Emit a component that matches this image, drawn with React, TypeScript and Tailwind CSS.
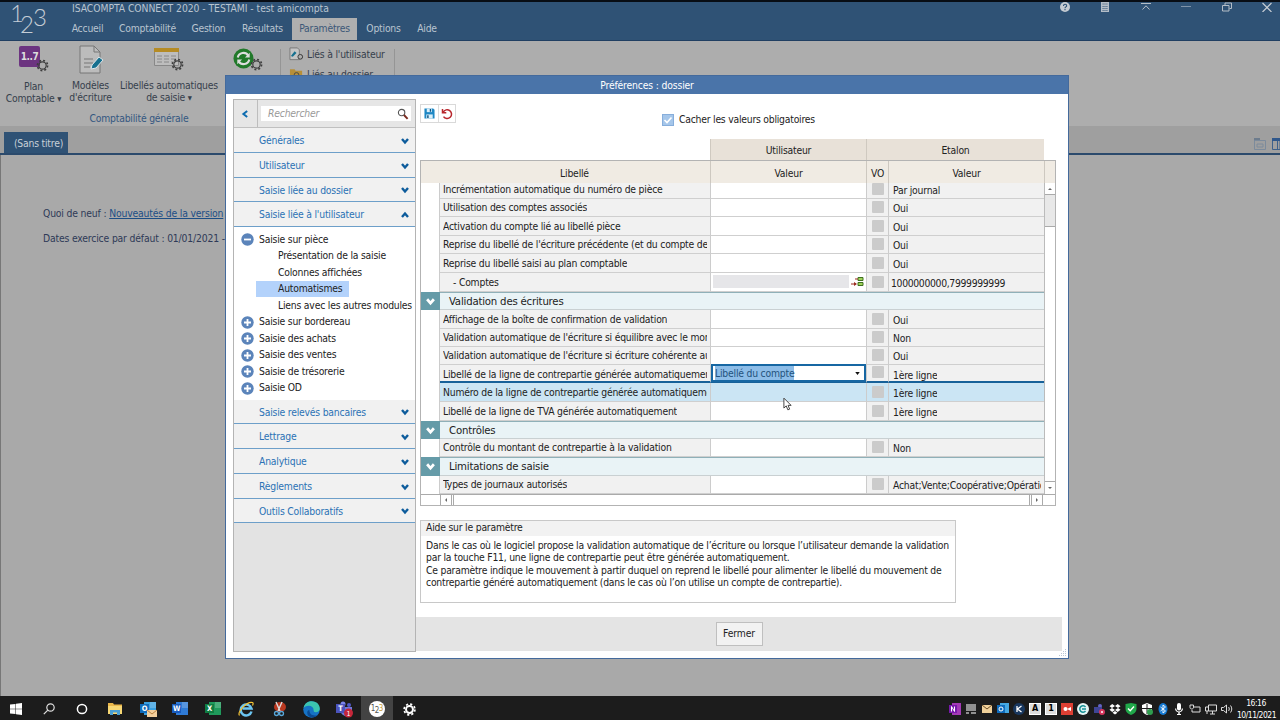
import * as React from "react";

interface IRow {
  h: string;
  label: string;
  etalon?: string;
  kind?: "group" | "edit" | "hover" | "accounts";
}

const rows: IRow[] = [
  { h: "h-[16px]", label: "Incrémentation automatique du numéro de pièce", etalon: "Par journal" },
  { h: "h-[18px]", label: "Utilisation des comptes associés", etalon: "Oui" },
  { h: "h-[19px]", label: "Activation du compte lié au libellé pièce", etalon: "Oui" },
  { h: "h-[18px]", label: "Reprise du libellé de l'écriture précédente (et du compte de", etalon: "Oui" },
  { h: "h-[19px]", label: "Reprise du libellé saisi au plan comptable", etalon: "Oui" },
  { h: "h-[19px]", label: "- Comptes", etalon: "1000000000,7999999999", kind: "accounts" },
  { h: "h-[18px]", label: "Validation des écritures", kind: "group" },
  { h: "h-[19px]", label: "Affichage de la boîte de confirmation de validation", etalon: "Oui" },
  { h: "h-[18px]", label: "Validation automatique de l'écriture si équilibre avec le mon", etalon: "Non" },
  { h: "h-[18px]", label: "Validation automatique de l'écriture si écriture cohérente au", etalon: "Oui" },
  { h: "h-[18px]", label: "Libellé de la ligne de contrepartie générée automatiquement", etalon: "1ère ligne", kind: "edit" },
  { h: "h-[19px]", label: "Numéro de la ligne de contrepartie générée automatiquement", etalon: "1ère ligne", kind: "hover" },
  { h: "h-[19px]", label: "Libellé de la ligne de TVA générée automatiquement", etalon: "1ère ligne" },
  { h: "h-[18px]", label: "Contrôles", kind: "group" },
  { h: "h-[18px]", label: "Contrôle du montant de contrepartie à la validation", etalon: "Non" },
  { h: "h-[19px]", label: "Limitations de saisie", kind: "group" },
  { h: "h-[18px]", label: "Types de journaux autorisés", etalon: "Achat;Vente;Coopérative;Opératio" },
];

const menuTop = ["Générales", "Utilisateur", "Saisie liée au dossier", "Saisie liée à l'utilisateur"];
const menuBottom = ["Saisie relevés bancaires", "Lettrage", "Analytique", "Règlements", "Outils Collaboratifs"];
const children = ["Présentation de la saisie", "Colonnes affichées", "Automatismes", "Liens avec les autres modules"];
const closed = ["Saisie sur bordereau", "Saisie des achats", "Saisie des ventes", "Saisie de trésorerie", "Saisie OD"];

const Gear = ({ className }: { className: string }) => (
  <svg viewBox="0 0 12 12" className={className} fill="none" stroke="#3d3d3d">
    <circle cx="6" cy="6" r="3.4" strokeWidth="1.1" />
    <circle cx="6" cy="6" r="4.7" strokeWidth="1.5" strokeDasharray="1.8 1.89" />
  </svg>
);

const Chevron = ({ up, className }: { up?: boolean; className: string }) => (
  <svg viewBox="0 0 8 8" className={className} fill="none" stroke="currentColor" strokeWidth="2.4">
    <path d={up ? "M1 6 4 2.500 7 6" : "M1 2 4 5.500 7 2"} />
  </svg>
);

const MenuItem = ({ label, open }: { label: string; open?: boolean }) => (
  <div className="flex h-[24.75px] shrink-0 items-center border-b border-[#6d9fc9] bg-[#f1f1f1] pt-[2px] pr-[6px] pl-[25px] text-[#2b72b5]">
    <span className="flex-1">{label}</span>
    <Chevron up={open} className="size-2 text-[#0d5c9c]" />
  </div>
);

const Toggle = ({ minus }: { minus?: boolean }) => (
  <svg viewBox="0 0 13 13" className="mr-[5px] ml-[7px] size-[13px]">
    <circle cx="6.5" cy="6.5" r="6.2" fill="#5b84ba" />
    <path d={minus ? "M3 6.5h7" : "M3 6.5h7M6.5 3v7"} stroke="#fff" strokeWidth="1.8" />
  </svg>
);

const Sidebar = () => (
  <div className="flex h-[553px] w-[183px] flex-col border border-[#b4b4b4] bg-[#e3e3e3]">
    <div className="flex h-[28px] shrink-0 border-b border-[#c0c0c0] bg-[#e6e6e6]">
      <div className="flex w-6 items-center justify-center border-r border-[#bdbdbd] text-[#0d6cb0]">
        <svg viewBox="0 0 8 8" className="mr-[2px] size-2" fill="none" stroke="currentColor" strokeWidth="2">
          <path d="M6.2 1 2.4 4l3.8 3" />
        </svg>
      </div>
      <div className="mt-[6px] ml-[3px] flex h-[15px] w-[150px] items-center bg-white pl-[7px] text-[#999] italic">
        <span className="flex-1">Rechercher</span>
        <svg viewBox="0 0 12 12" className="mr-[2px] size-[12px]" fill="none">
          <circle cx="4.6" cy="4.6" r="3.2" stroke="#555" strokeWidth="1.1" />
          <path d="m7 7 3.6 3.8" stroke="#7a2b20" strokeWidth="1.9" />
        </svg>
      </div>
    </div>
    {menuTop.map((item, key) => (
      <MenuItem key={item} label={item} open={key === 3} />
    ))}
    <div className="h-[172.5px] shrink-0 bg-white pt-[4px] text-[#222]">
      <div className="flex h-[16.55px] items-center"><Toggle minus />Saisie sur pièce</div>
      {children.map((item) => (
        <div key={item} className="flex h-[16.55px] items-center pl-[22px] whitespace-nowrap">
          <span className={item === "Automatismes" ? "flex h-4 items-center bg-[#b3d2fb] pr-[7px] pl-[22px]" : "pl-[22px]"}>{item}</span>
        </div>
      ))}
      {closed.map((item) => (
        <div key={item} className="flex h-[16.55px] items-center"><Toggle />{item}</div>
      ))}
    </div>
    {menuBottom.map((item) => (
      <MenuItem key={item} label={item} />
    ))}
  </div>
);

const Combo = () => (
  <div className="relative z-10 -mt-px flex h-[18px] w-full items-center border-2 border-[#1767a3] bg-white pl-[2px]">
    <span className="bg-[#8dbde8] pt-px leading-[13px] text-[#23527c]">Libellé du compte</span>
    <svg viewBox="0 0 6 4" className="mr-[4px] ml-auto h-[3px] w-[5px]"><path d="M0 0h6L3 4z" fill="#111" /></svg>
  </div>
);

const TableRow = ({ row }: { row: IRow }) => {
  if (row.kind === "group") {
    return (
      <div className={`flex shrink-0 ${row.h}`}>
        <div className="flex w-[19px] items-center justify-center bg-[#659ba8] text-white">
          <Chevron className="size-[9px]" />
        </div>
        <div className="flex flex-1 items-center border-t border-b border-t-[#8fb0b8] border-b-[#c9d0d2] bg-[#e9f3f6] pt-[2px] pl-[9px] text-[11.300px]">{row.label}</div>
      </div>
    );
  }
  const hover = row.kind === "hover";
  const edit = row.kind === "edit";
  const line = edit ? "border-b-2 border-[#176199]" : "border-b border-[#cfcfcf]";
  const cell = `${hover ? "bg-[#cbe5f4]" : "bg-[#f1f1f1]"} ${line}`;
  return (
    <div className={`flex shrink-0 ${row.h}`}>
      <div className="w-[19px] border-r border-[#ccc] bg-white" />
      <div className={`flex w-[271px] items-end border-r border-r-[#ccc] pr-[3px] pl-[3px] ${edit ? "leading-[14px]" : "leading-[17px]"} ${cell}`}>
        <span className={row.kind === "accounts" ? "pl-[10px]" : "overflow-hidden whitespace-nowrap"}>{row.label}</span>
      </div>
      <div className={`flex w-[156px] items-start border-r border-r-[#ccc] ${line} ${hover ? "bg-[#cbe5f4]" : "bg-white"}`}>
        {edit && <Combo />}
        {row.kind === "accounts" && (
          <div className="mt-[2px] ml-[2px] flex h-[13px] w-[152px] bg-[#e6e6e9]">
            <svg viewBox="0 0 16 12" className="ml-auto h-[13px] w-[16px] bg-white">
              <path d="M9 2h5v3H9zM9 7h5v3H9z" fill="#9ed35a" stroke="#3f6f20" />
              <path d="M2 8.500h5M6 3.500h3" stroke="#9b2c20" strokeWidth="1.2" fill="none" />
              <path d="m5 6.500 3 2-3 2z" fill="#9b2c20" />
            </svg>
          </div>
        )}
      </div>
      <div className={`flex w-[22px] items-end justify-center border-r border-r-[#ccc] pb-[3px] ${cell}`}>
        <div className="size-[12px] rounded-[1px] bg-[#cbcbcb]" />
      </div>
      <div className={`flex w-[155px] items-end overflow-hidden pl-[3px] whitespace-nowrap ${edit ? "leading-[12px]" : "leading-[16px]"} ${cell}`}>
        <span className={row.kind === "accounts" ? "-ml-px tracking-[-0.320px]" : "mr-[3px] overflow-hidden pl-px"}>{row.etalon}</span>
      </div>
    </div>
  );
};

const Arrow = ({ d }: { d: string }) => (
  <svg viewBox="0 0 6 6" className="size-[6px]"><path d={d} fill="#666" /></svg>
);

const Table = () => (
  <div className="w-[636px]">
    <div className="ml-[290px] flex h-[21px] w-[334px] border-l border-[#cfc9c0] bg-[#e8e1d8] text-center leading-[22px]">
      <div className="w-[156px] border-r border-[#cfc9c0]">Utilisateur</div>
      <div className="flex-1">Etalon</div>
    </div>
    <div className="border border-[#b3b3b3]">
      <div className="flex h-[22px] bg-[#f0ebe3] text-center leading-[25px] *:border-r *:border-[#cdc8c0]">
        <div className="w-[290px] pl-[18px]">Libellé</div>
        <div className="w-[156px]">Valeur</div>
        <div className="w-[22px]">VO</div>
        <div className="w-[156px]">Valeur</div>
      </div>
      <div className="flex">
        <div className="flex w-[623px] flex-col">
          {rows.map((row) => <TableRow key={row.label} row={row} />)}
        </div>
        <div className="flex h-[311px] w-[11px] flex-col border-l border-[#bbb] bg-[#e8e8e8]">
          <div className="flex h-[12px] items-center justify-center border-b border-[#aaa] bg-white"><Arrow d="M1 4h4L3 2z" /></div>
          <div className="mt-[31px] flex-1 border-t border-b border-[#aaa] bg-white" />
          <div className="flex h-[12px] items-center justify-center bg-white"><Arrow d="M1 2h4L3 4z" /></div>
        </div>
      </div>
      <div className="flex h-[11px] border-t border-[#aaa] bg-white pl-[19px]">
        <div className="flex w-[12px] items-center justify-center border-r border-l border-[#aaa]"><Arrow d="M4 1v4L2 3z" /></div>
        <div className="ml-px w-[577px] border-r border-l border-[#aaa]" />
        <div className="ml-px flex w-[12px] items-center justify-center border-r border-l border-[#aaa]"><Arrow d="M2 1v4l2-2z" /></div>
      </div>
    </div>
  </div>
);

const Preferences = () => (
  <div className="absolute top-[75px] left-[225px] flex h-[584px] w-[844px] flex-col border border-[#446a9c] bg-white tracking-[-0.200px] text-[#222]">
    <div className="h-[18px] shrink-0 bg-[#4a74a9] text-center leading-[19px] tracking-[-0.150px] text-white">Préférences : dossier</div>
    <div className="flex flex-1 pt-[5px] pl-[7px]">
      <Sidebar />
      <div className="flex flex-1 flex-col">
        <div className="flex h-[40px] pt-[5px] pl-[4px]">
          <div className="flex h-[19px] w-[36px] items-center border border-[#d9d9d9]">
            <svg viewBox="0 0 12 12" className="mx-[3px] size-[11px]">
              <path d="M.5.5H10l1.5 1.5v9.5H.5z" fill="#1d87c4" />
              <path d="M3 .5h5.500v4H3z" fill="#d9effa" />
              <path d="M2.500 7h7v4.500h-7z" fill="#d9effa" />
              <path d="M3.500 8h1.500v3H3.500zM6.300 1h1.300v3H6.300z" fill="#0a4d7c" />
            </svg>
            <div className="flex h-full flex-1 items-center justify-center border-l border-[#ddd]">
              <svg viewBox="0 0 12 12" className="size-[12px]" fill="none" stroke="#b8262c" strokeWidth="1.5">
                <path d="M2.200 4.200A4.400 4.400 0 1 1 2.500 8.600" />
                <path d="M1.500 1v3.800h3.800" />
              </svg>
            </div>
          </div>
          <div className="mt-[9px] ml-[206px] flex h-[13px] items-center">
            <div className="mr-[5px] flex size-[12px] items-center justify-center border border-[#87aedb] bg-[#a5c6ea]">
              <svg viewBox="0 0 10 10" className="size-[10px]" fill="none" stroke="#fff" strokeWidth="1.600"><path d="m1.500 5 2.500 2.600L8.500 2.500" /></svg>
            </div>
            <span className="tracking-[-0.220px]">Cacher les valeurs obligatoires</span>
          </div>
        </div>
        <div className="pl-[4px]"><Table /></div>
        <div className="mt-[14px] ml-[4px] h-[83px] w-[536px] shrink-0 border border-[#c8c8c8]">
          <div className="h-[15px] bg-[#f2f2f2] pl-[5px] leading-[13px]">Aide sur le paramètre</div>
          <div className="pt-[3px] pl-[5px] leading-[12.3px] tracking-[-0.215px] whitespace-nowrap">
            Dans le cas où le logiciel propose la validation automatique de l’écriture ou lorsque l’utilisateur demande la validation<br />
            par la touche F11, une ligne de contrepartie peut être générée automatiquement.<br />
            Ce paramètre indique le mouvement à partir duquel on reprend le libellé pour alimenter le libellé du mouvement de<br />
            contrepartie généré automatiquement (dans le cas où l’on utilise un compte de contrepartie).
          </div>
        </div>
        <div className="mt-[14px] mr-[6px] flex h-[34px] items-center justify-center bg-[#e4e4e4]">
          <div className="flex h-[24px] w-[47px] items-center justify-center border border-[#bfbfbf] bg-[#f2f2f2] tracking-[-0.100px]">Fermer</div>
        </div>
      </div>
    </div>
    <svg viewBox="0 0 9 9" className="absolute right-[1px] bottom-[1px] size-[9px]" fill="#b9c6d6">
      <path d="M7 1h1v1H7zM7 3h1v1H7zM5 3h1v1H5zM7 5h1v1H7zM5 5h1v1H5zM3 5h1v1H3zM7 7h1v1H7zM5 7h1v1H5zM3 7h1v1H3zM1 7h1v1H1z" />
    </svg>
  </div>
);

const Office = ({ letter, dark, light, mail }: { letter: string; dark: string; light: string; mail?: boolean }) => (
  <svg viewBox="0 0 18 18" className="size-[18px]">
    <path d="M5 2h12v13H5z" fill={light} />
    <path d="M11 2h6v6h-6z" fill="#fff" opacity=".2" />
    <path d="M1 4h9v9H1z" fill={dark} />
    <text x="5.500" y="11.300" fontSize="7.500" fontWeight="bold" textAnchor="middle" fill="#fff">{letter}</text>
    {mail && <path d="M8 10h10v7H8z" fill="#f3cf9d" />}
    {mail && <path d="m8 10 5 4 5-4" fill="none" stroke="#b98244" />}
  </svg>
);

const slot = "flex h-6 w-[32.8px] items-center justify-center";

const Taskbar = () => (
  <div className="flex h-6 items-center bg-[#1c1c1c] pt-[2px] text-white">
    <div className={slot}>
      <svg viewBox="0 0 12 12" className="size-[12px]" fill="#fff"><path d="M0 1.600 5.500.900v4.800H0zM6 .800 12 0v5.700H6zM0 6.300h5.500v4.800L0 10.400zM6 6.300h6V12l-6-.8z" /></svg>
    </div>
    <div className={slot}>
      <svg viewBox="0 0 12 12" className="size-[12px]" fill="none" stroke="#ddd" strokeWidth="1.200"><circle cx="7.500" cy="4.500" r="3.700" /><path d="M4.800 7.200.800 11.200" /></svg>
    </div>
    <div className={slot}>
      <svg viewBox="0 0 12 12" className="size-[12px]" fill="none" stroke="#fff" strokeWidth="1.500"><circle cx="6" cy="6" r="4.600" /></svg>
    </div>
    <div className={slot}>
      <svg viewBox="0 0 16 14" className="h-[14px] w-[16px]"><path d="M1 1h5l1 1.500h8V12H1z" fill="#e9b64a" /><path d="M1 4h14v8H1z" fill="#f7d774" /><path d="M3 8h10v5h-3v-2.500H6V13H3z" fill="#4a9fd4" /></svg>
    </div>
    <div className={slot}><Office letter="O" dark="#0f6cbd" light="#3aa0e0" mail /></div>
    <div className={slot}><Office letter="W" dark="#185abd" light="#2f7bd6" /></div>
    <div className={slot}><Office letter="X" dark="#107c41" light="#1f9a5b" /></div>
    <div className={slot}>
      <svg viewBox="0 0 16 16" className="size-[16px]" fill="none">
        <path d="M13.500 10.500A5.500 5.500 0 1 1 13.500 7.500H4.500" stroke="#6cc5f2" strokeWidth="2.500" />
        <path d="M1.500 14.500C-1 11 9 0 14.500 1.500c1 .5.500 2 0 3" stroke="#f4c436" strokeWidth="1.200" />
      </svg>
    </div>
    <div className={slot}>
      <svg viewBox="0 0 16 16" className="size-[16px]" fill="none">
        <ellipse cx="9" cy="6" rx="6" ry="5" fill="#b93820" />
        <path d="m5 1 4 9M11 1 7 10" stroke="#ddd" strokeWidth="1.400" />
        <circle cx="5.500" cy="12.500" r="2" stroke="#58a6d8" strokeWidth="1.300" /><circle cx="10.500" cy="12.500" r="2" stroke="#58a6d8" strokeWidth="1.300" />
      </svg>
    </div>
    <div className={slot}>
      <svg viewBox="0 0 16 16" className="size-[17px]">
        <circle cx="8" cy="8" r="7.800" fill="#1673c5" />
        <path d="M.5 7C1 2.500 4.500.2 8 .2c5 0 8 3.500 7.800 7 0 2-1.800 3.300-3.800 3.300s-2-1-2-1.700C10 6 8 4.500 5.500 4.500S1 5.500.5 7z" fill="#3bc4b0" />
        <path d="M6 8.500c0 4 3 6 7.500 4.800C11 16.500 4 16 4 11c0-1.500.8-2.500 2-2.500z" fill="#0b4a92" />
      </svg>
    </div>
    <div className={slot}>
      <svg viewBox="0 0 18 18" className="size-[18px]">
        <circle cx="8" cy="4" r="2.500" fill="#7b83eb" /><circle cx="14" cy="5" r="2" fill="#5059c9" />
        <path d="M6 7h11v5c0 3-4 4-6 4s-5-2-5-4z" fill="#7078d8" /><path d="M1 4h9v9H1z" fill="#4b53bc" />
        <text x="5.500" y="11.300" fontSize="7.500" fontWeight="bold" textAnchor="middle" fill="#fff">T</text>
        <circle cx="13.500" cy="13" r="4.500" fill="#c4263a" />
        <text x="13.500" y="15.500" fontSize="7" textAnchor="middle" fill="#fff">1</text>
      </svg>
    </div>
    <div className="-mt-[2px] flex h-6 w-[32px] items-center justify-center bg-[#434343] pt-[2px]">
      <div className="flex size-4 items-center justify-center rounded-full bg-white text-[8px] tracking-[-0.5px] text-[#555]">1<span className="mt-1">2</span><span className="text-[#c89b35]">3</span></div>
    </div>
    <div className={slot}>
      <svg viewBox="0 0 12 12" className="size-[13px]" fill="none" stroke="#fff"><circle cx="6" cy="6" r="3.200" strokeWidth="1.800" /><circle cx="6" cy="6" r="5" strokeWidth="1.500" strokeDasharray="2 1.930" /></svg>
    </div>
    <div className="ml-auto flex items-center gap-[4px] pr-[5px] *:h-[12px] *:w-[12px]">
      <svg viewBox="0 0 12 12"><path d="M3 0h9v12H3z" fill="#a33ab5" /><path d="M0 2h8v8H0z" fill="#7719aa" /><path d="M2.500 8.500v-5l3 5v-5" stroke="#fff" fill="none" /></svg>
      <svg viewBox="0 0 12 12"><path d="M1 1h10v7H1zM1 9h3v2H1zM6 9h5v2H6z" fill="#909090" /></svg>
      <svg viewBox="0 0 12 12"><path d="M1 2h10v8H1z" fill="#efcf99" /><path d="m1 2 5 4 5-4" stroke="#6c4e26" fill="none" /></svg>
      <svg viewBox="0 0 12 12"><path d="M3 0h9v10H3z" fill="#45a8e2" /><path d="M0 2h8v8H0z" fill="#0f6cbd" /><circle cx="4" cy="6" r="2" stroke="#fff" fill="none" /></svg>
      <svg viewBox="0 0 12 12"><circle cx="6" cy="6" r="6" fill="#18375f" /><path d="M4 3v6M8.500 3 4.500 6l4 3" stroke="#fff" strokeWidth="1.300" fill="none" /></svg>
      <div className="flex items-center justify-center border border-white bg-[#ddd] text-[9px] font-bold text-black">A</div>
      <div className="flex items-center justify-center border border-white bg-[#ddd] text-[9px] font-bold text-black">1</div>
      <svg viewBox="0 0 12 12"><path d="M0 0h12v12H0z" fill="#dd3f33" /><circle cx="4.500" cy="6" r="2" fill="#fff" /><path d="m6 6 4-2v4z" fill="#fff" /></svg>
      <svg viewBox="0 0 12 12"><circle cx="6" cy="6" r="6" fill="#e5f5f4" /><path d="M9 6H5M8.500 8A3.200 3.200 0 1 1 8.500 4" stroke="#178f94" strokeWidth="1.500" fill="none" /></svg>
      <svg viewBox="0 0 12 12"><circle cx="7" cy="3" r="2" fill="#6264c7" /><path d="M1 4h8v6H1z" fill="#3f4595" /><circle cx="9" cy="9" r="3" fill="#d8365d" /><circle cx="9" cy="9" r="1" fill="#fff" /></svg>
      <svg viewBox="0 0 12 12" fill="#fff"><path d="m3.200 1 2.800 2-3 2L.5 3.200zM8.800 1 6 3l3 2 2.500-1.800zM.5 6.800 3 5l3 2-2.800 2zM11.500 6.800 9 5 6 7l2.800 2zM6 8l2.500 1.800L6 11.500 3.500 9.800z" /></svg>
      <svg viewBox="0 0 12 12"><path d="m6 0 5.500 1v5c0 3-2.500 5-5.500 6C3 11 .5 9 .5 6V1z" fill="#20a84a" /><path d="m3 5.500 2.200 2.300L9 3.500" stroke="#fff" strokeWidth="1.400" fill="none" /></svg>
      <svg viewBox="0 0 12 12"><path d="m6 0 5 2v4c0 3-2 5-5 6-3-1-5-3-5-6V2z" fill="#fff" /><path d="M6 1v10M1 5.500h10" stroke="#1c1c1c" /><circle cx="9" cy="9" r="3" fill="#2f9e4f" /></svg>
      <svg viewBox="0 0 12 12"><ellipse cx="6" cy="6" rx="4.500" ry="6" fill="#1479d3" /><path d="m3.500 4 5 4L6 10V2l2.500 2-5 4" stroke="#fff" strokeWidth=".9" fill="none" /></svg>
      <svg viewBox="0 0 12 12" fill="#fff"><rect x="4" y="0" width="4" height="7.500" rx="2" /><path d="M2 5.500h1.200c0 4 5.600 4 5.600 0H10c0 2-1.200 3.300-3.300 3.700V11H8v1H4v-1h1.300V9.200C3.200 8.800 2 7.500 2 5.500z" /></svg>
      <svg viewBox="0 0 12 12" fill="none" stroke="#ddd"><path d="M4 4h7v5H3V7M1 2v2.500c0 2 3.500 2 3.500 0V2H1" /></svg>
      <svg viewBox="0 0 12 12" fill="none" stroke="#ddd"><path d="M3.500 2h8v6h-8zM7.500 8v3M5 11h5M.5 4h3v4h-3zM2 8v3" /></svg>
      <svg viewBox="0 0 12 12" fill="none" stroke="#ddd"><path d="M.5 4.500h2L5.500 2v8l-3-2.500h-2zM7.500 4c1 1 1 3 0 4M9.500 2.500c1.700 2 1.700 5 0 7" /></svg>
      <div className="h-[24px]! w-[38px]! text-center text-[8.500px] leading-[12px] tracking-[-0.500px] whitespace-nowrap">16:16<br />10/11/2021</div>
    </div>
  </div>
);

const tabs = ["Accueil", "Comptabilité", "Gestion", "Résultats", "Paramètres", "Options", "Aide"];
const tabWidths = ["w-[47px]", "w-[73px]", "w-[49px]", "w-[59px]", "w-[65px]", "w-[53px]", "w-[34px]"];

const Header = () => (
  <div className="flex h-[41px] border-t-2 border-b border-t-[#080d14] border-b-[#203f62] bg-[#2f5275] text-[#b9c4d0]">
    <svg viewBox="0 0 42 36" className="mr-[14px] ml-[8px] h-[36px] w-[42px]" fontFamily="Lato" fontWeight="300" fontSize="24" fill="#c5cdd6">
      <text x="2" y="20">1</text>
      <text x="12" y="31">2</text>
      <text x="25" y="24">3</text>
    </svg>
    <div className="flex-1">
      <div className="h-[16px] pl-[8px] leading-[13px] tracking-[-0.050px] whitespace-nowrap">ISACOMPTA CONNECT 2020 - TESTAMI - test amicompta</div>
      <div className="flex h-[22px] text-center leading-[21px]">
        {tabs.map((tab, key) => (
          <div key={tab} className={`${tabWidths[key]} ${tab === "Paramètres" ? "bg-[#afafaf] text-[#3c5878]" : ""}`}>{tab}</div>
        ))}
      </div>
    </div>
    <div className="-mt-px flex w-[220px] justify-between pt-px pr-[8px] *:size-[10px]">
      <svg viewBox="0 0 10 10"><circle cx="5" cy="5" r="5" fill="#c5cbd2" /><path d="M3.500 4c0-2.500 3.200-2 3.200-.3C6.700 5 5 4.800 5 6.200M5 7v1.200" stroke="#2f5275" strokeWidth="1.100" fill="none" /></svg>
      <svg viewBox="0 0 10 10"><path d="M1 0h8v10H1z" fill="#b4bdc7" /><path d="M2.500 2h5M2.500 4.500h5M2.500 6.500h5M2.500 8.500h5" stroke="#2f5275" strokeDasharray="1.200 .7" strokeWidth=".8" /></svg>
      <svg viewBox="0 0 10 10" fill="none" stroke="#b4bdc7"><path d="M0 1.500h10M1.500 7.500 5 3.800l3.500 3.700" /></svg>
      <svg viewBox="0 0 10 10" fill="none" stroke="#7f93a9"><path d="M0 4.500h10" /></svg>
      <svg viewBox="0 0 10 10" fill="none" stroke="#b4bdc7"><path d="M.5 3.500h6.500v5.500H.5zM3 3V1h6.500v5.500H7.500" /></svg>
      <svg viewBox="0 0 10 10" fill="none" stroke="#c5cbd2" strokeWidth="1.200"><path d="m.5 1 9 9M9.500 1l-9 9" /></svg>
    </div>
  </div>
);

const Ribbon = () => (
  <div className="flex h-[85px] bg-[#adadad] text-[#36404c]">
    <div className="w-[280px]">
      <div className="flex h-[70px] pt-[4px] text-center leading-[12px] whitespace-nowrap">
        <div className="w-[67px]">
          <div className="relative mb-[4px] ml-[19px] h-[30px] w-[32px]">
            <div className="mt-px h-[21px] w-[21px] rounded-[2px] bg-[#6c3480] text-[10px] leading-[21px] font-bold tracking-[-0.5px] text-[#ddd]">1..7</div>
            <Gear className="absolute top-[13px] left-[17px] size-[13px]" />
          </div>
          Plan<br />Comptable <span className="align-[1px] text-[6px]">▼</span>
        </div>
        <div className="w-[47px]">
          <svg viewBox="0 0 26 30" className="mx-auto mb-[4px] h-[30px] w-[26px]">
            <path d="M2 1h14l6 6v21H2z" fill="#bcbcbc" stroke="#777" /><path d="M16 1v6h6M6 14h9M6 18h9M6 22h6" fill="none" stroke="#777" />
            <path d="m14 20 7-8 4 3-7 8-5 1z" fill="#16708f" stroke="#dde6ea" />
          </svg>
          Modèles<br />d'écriture
        </div>
        <div className="w-[110px]">
          <div className="relative mx-auto mb-[4px] h-[30px] w-[30px]">
            <svg viewBox="0 0 25 18" className="absolute top-[3px] left-0 h-[18px] w-[25px]"><path d="M.5.5h24v17H.5z" fill="#bdbdbd" stroke="#888" /><path d="M0 0h25v4H0z" fill="#b58b24" /><path d="M3 8h19M3 11h19M3 14h19" stroke="#888" strokeDasharray="5 2" /></svg>
            <Gear className="absolute top-[13px] left-[17px] size-[13px]" />
          </div>
          Libellés automatiques<br />de saisie <span className="align-[1px] text-[6px]">▼</span>
        </div>
        <div className="relative ml-[9px] h-[30px] w-[32px]">
          <svg viewBox="0 0 22 22" className="mt-[3px] size-[21px]" fill="none"><circle cx="11" cy="11" r="10.500" fill="#21792a" /><path d="M5 10a6 6 0 0 1 11-2M17 12a6 6 0 0 1-11 2" stroke="#ddd" strokeWidth="2.200" /><path d="M17.500 5v5h-5zM4.500 17v-5h5z" fill="#ddd" /></svg>
          <Gear className="absolute top-[13px] left-[17px] size-[13px]" />
        </div>
      </div>
      <div className="w-[278px] text-center leading-[14px] text-[#345781]">Comptabilité générale</div>
    </div>
    <div className="mt-[8px] h-[60px] w-[115px] border-r border-l border-[#959595] pl-[8px] leading-[20px] whitespace-nowrap">
      <div className="-mt-[5px] flex h-5 items-center">
        <svg viewBox="0 0 16 14" className="mr-[3px] h-[14px] w-[15px]"><path d="M1 .500h8l2 2V13H1z" fill="#c5c5c5" stroke="#777" /><path d="m2 9 4-5 2 2-4 4z" fill="#16708f" /><circle cx="12" cy="10" r="2.500" stroke="#333" fill="#adadad" /></svg>
        Liés à l'utilisateur
      </div>
      <div className="flex h-5 items-center">
        <svg viewBox="0 0 16 14" className="mr-[3px] h-[14px] w-[15px]"><path d="M1 2h5l1 1.500h7V13H1z" fill="#b68f38" /><circle cx="8" cy="8" r="2.500" stroke="#444" fill="none" /></svg>
        Liés au dossier
      </div>
    </div>
  </div>
);

const App = () => {
  return (
    <div className="relative h-[720px] w-[1280px] overflow-hidden bg-[#a9a9a9] font-['DejaVu_Sans_Condensed','DejaVu_Sans',sans-serif] text-[10.300px] tracking-[-0.200px]">
      <Header />
      <Ribbon />
      <div className="flex h-[29px] items-end border-b-2 border-[#2b4a6c] bg-[#9f9f9f] pl-[4px]">
        <div className="h-[21px] w-[64px] bg-[#2f5275] pl-[5px] text-center leading-[22px] text-[#c8d0d8]">(Sans titre)</div>
        <div className="mb-[3px] ml-auto flex gap-[6px]">
          <svg viewBox="0 0 12 12" className="size-[12px]"><path d="M0 0h6v3H0z" fill="#6d7c8d" /><path d="M.5 2.500h11v9H.5zM3 6h6v3H3z" fill="none" stroke="#7c8b9c" /></svg>
          <svg viewBox="0 0 8 12" className="h-[12px] w-[8px]"><path d="M.5.500H8v11H.5zM5.500 3v9" fill="none" stroke="#3e618b" /><path d="M0 0h8v3H0z" fill="#2f578b" /></svg>
        </div>
      </div>
      <div className="h-[541px] border-l border-[#777] pt-[51px] pl-[42px] tracking-[-0.160px] text-[#2e3957]">
        <div className="h-[25px] leading-[14px]">Quoi de neuf : <span className="text-[#1c4e86] underline">Nouveautés de la version</span></div>
        <div className="leading-[14px]">Dates exercice par défaut : 01/01/2021 -</div>
      </div>
      <Taskbar />
      <Preferences />
      <svg viewBox="0 0 10 15" className="absolute top-[397px] left-[783px] h-[14px] w-[9px]"><path d="M1 1v11l2.600-2.400L5.400 14l2-.8-1.800-4.200H9z" fill="#fff" stroke="#333" /></svg>
    </div>
  );
};

export default App;
